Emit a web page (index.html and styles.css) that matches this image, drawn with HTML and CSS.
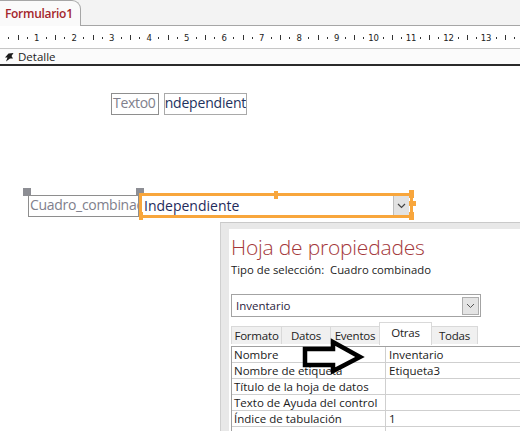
FILE: index.html
```html
<!DOCTYPE html>
<html lang="es">
<head>
    <meta charset="UTF-8">
    <title>Formulario1</title>
    <link rel="stylesheet" href="styles.css">
</head>
<body>
    <div class="doc-tabs">
        <div class="doc-tab">Formulario1</div>
    </div>

    <div class="ruler">
        <div class="ru-unit"><span class="dot"></span><span class="bar"></span><span class="dot"></span><span class="num">1</span></div>
        <div class="ru-unit"><span class="dot"></span><span class="bar"></span><span class="dot"></span><span class="num">2</span></div>
        <div class="ru-unit"><span class="dot"></span><span class="bar"></span><span class="dot"></span><span class="num">3</span></div>
        <div class="ru-unit"><span class="dot"></span><span class="bar"></span><span class="dot"></span><span class="num">4</span></div>
        <div class="ru-unit"><span class="dot"></span><span class="bar"></span><span class="dot"></span><span class="num">5</span></div>
        <div class="ru-unit"><span class="dot"></span><span class="bar"></span><span class="dot"></span><span class="num">6</span></div>
        <div class="ru-unit"><span class="dot"></span><span class="bar"></span><span class="dot"></span><span class="num">7</span></div>
        <div class="ru-unit"><span class="dot"></span><span class="bar"></span><span class="dot"></span><span class="num">8</span></div>
        <div class="ru-unit"><span class="dot"></span><span class="bar"></span><span class="dot"></span><span class="num">9</span></div>
        <div class="ru-unit"><span class="dot"></span><span class="bar"></span><span class="dot"></span><span class="num">10</span></div>
        <div class="ru-unit"><span class="dot"></span><span class="bar"></span><span class="dot"></span><span class="num">11</span></div>
        <div class="ru-unit"><span class="dot"></span><span class="bar"></span><span class="dot"></span><span class="num">12</span></div>
        <div class="ru-unit"><span class="dot"></span><span class="bar"></span><span class="dot"></span><span class="num">13</span></div>
        <div class="ru-unit"><span class="dot"></span><span class="bar"></span><span class="dot"></span><span class="num"></span></div>
    </div>

    <div class="section-bar">
        <svg class="section-icon" width="10" height="10" viewBox="0 0 10 10">
            <path d="M9.5 1 L4.5 1.5 L1 5.5 L3.5 5.5 L2 9.5 L6 6.5 L9 6.5 L7.5 4 Z" fill="#1a1a1a"/>
        </svg>
        <span>Detalle</span>
    </div>

    <!-- superficie de diseño -->
    <div class="canvas">
        <div class="ctl label-ctl texto0">Texto0</div>
        <div class="ctl text-ctl textbox0"><span class="cut">Independiente</span></div>

        <span class="handle gray h-l1"></span>
        <span class="handle gray h-l2"></span>
        <div class="ctl label-ctl combo-label">Cuadro_combinado</div>

        <div class="combo">
            <span class="combo-text">Independiente</span>
            <span class="combo-btn">
                <svg width="9" height="6" viewBox="0 0 9 6"><path d="M1 1 L4.5 4.5 L8 1" fill="none" stroke="#444" stroke-width="1.2"/></svg>
            </span>
        </div>
        <span class="handle orange o-top"></span>
        <span class="handle orange o-bl"></span>
        <span class="handle orange o-tr"></span>
        <span class="handle orange o-mr"></span>
        <span class="handle orange o-br"></span>

        <!-- hoja de propiedades flotante -->
        <div class="prop-sheet">
            <div class="prop-inner">
                <h2 class="prop-title">Hoja de propiedades</h2>
                <div class="prop-sel">Tipo de selección:&nbsp; Cuadro combinado</div>

                <div class="prop-select">
                    <span>Inventario</span>
                    <span class="select-btn">
                        <svg width="9" height="6" viewBox="0 0 9 6"><path d="M1 1 L4.5 4.5 L8 1" fill="none" stroke="#555" stroke-width="1"/></svg>
                    </span>
                </div>

                <div class="prop-tabs">
                    <span class="ptab">Formato</span>
                    <span class="ptab">Datos</span>
                    <span class="ptab">Eventos</span>
                    <span class="ptab active">Otras</span>
                    <span class="ptab">Todas</span>
                </div>

                <div class="prop-grid">
                    <div class="prow"><span class="pname">Nombre</span><span class="pval">Inventario</span></div>
                    <div class="prow"><span class="pname">Nombre de etiqueta</span><span class="pval">Etiqueta3</span></div>
                    <div class="prow"><span class="pname">Título de la hoja de datos</span><span class="pval"></span></div>
                    <div class="prow"><span class="pname">Texto de Ayuda del control</span><span class="pval"></span></div>
                    <div class="prow"><span class="pname">Índice de tabulación</span><span class="pval">1</span></div>
                    <div class="prow"><span class="pname">Punto de tabulación</span><span class="pval">Sí</span></div>
                </div>
            </div>
        </div>

        <svg class="callout-arrow" width="70" height="42" viewBox="0 0 70 42">
            <path d="M5 12 L33 12 L33 5 L60 20 L33 34 L33 28 L5 28 Z" fill="#fff" stroke="#000" stroke-width="4.5" stroke-linejoin="miter"/>
        </svg>
    </div>
</body>
</html>
```

FILE: styles.css
```css
* {
    margin: 0;
    padding: 0;
    box-sizing: border-box;
}

body {
    width: 520px;
    height: 431px;
    overflow: hidden;
    background: #fff;
    font-family: "Open Sans", "Noto Sans", sans-serif;
    color: #222;
}

/* pestañas de documento */
.doc-tabs {
    height: 26px;
    background: #f3f3f3;
    border-bottom: 1px solid #a6a6a6;
    display: flex;
    align-items: flex-end;
}

.doc-tab {
    width: 81px;
    height: 26px;
    margin-bottom: -1px;
    background: #fafafa;
    border: 1px solid #a6a6a6;
    border-left: none;
    border-bottom: none;
    border-top-right-radius: 9px;
    padding: 4px 0 0 5px;
    font-size: 12px;
    font-weight: 600;
    color: #a4262c;
    letter-spacing: -0.3px;
}

/* regla */
.ruler {
    height: 22px;
    background: #fff;
    border-bottom: 1px solid #c6c6c6;
    display: flex;
    align-items: center;
    padding-left: 4px;
    margin-top: 1px;
}

.ru-unit {
    flex: 0 0 37.5px;
    display: flex;
    align-items: center;
}

.ru-unit span {
    flex: 1;
    display: flex;
    justify-content: center;
    align-items: center;
}

.ru-unit .dot::before {
    content: "";
    width: 1px;
    height: 2px;
    background: #333;
}

.ru-unit .bar::before {
    content: "";
    width: 1px;
    height: 5px;
    background: #333;
}

.ru-unit .num {
    font-family: "DejaVu Sans", sans-serif;
    font-size: 8.5px;
    color: #222;
    white-space: nowrap;
}

/* barra de sección */
.section-bar {
    height: 17px;
    background: #fbfbfb;
    border-bottom: 2px solid #2a2a2a;
    display: flex;
    align-items: center;
    gap: 4px;
    padding-left: 4px;
    font-size: 11.5px;
    color: #222;
}

/* superficie */
.canvas {
    position: relative;
    height: 366px;
    background: #fff;
}

.ctl {
    position: absolute;
    height: 22px;
    font-size: 14px;
    line-height: 18px;
    white-space: nowrap;
    overflow: hidden;
}

.label-ctl {
    border: 1px solid #8e8e8e;
    color: #80808c;
    padding-left: 1px;
}

.text-ctl {
    border: 1px solid #a9a9a9;
    color: #22325e;
}

.texto0 {
    left: 111px;
    top: 27px;
    width: 48px;
    letter-spacing: -0.3px;
}

.textbox0 {
    left: 164px;
    top: 27px;
    width: 83px;
    letter-spacing: -0.2px;
}

.textbox0 .cut {
    display: inline-block;
    margin-left: -4px;
}

.combo-label {
    left: 28px;
    top: 129px;
    width: 111px;
    letter-spacing: -0.3px;
}

.combo {
    position: absolute;
    left: 139px;
    top: 127px;
    width: 274px;
    height: 25px;
    border: 3px solid #f8a63c;
    display: flex;
    align-items: center;
    justify-content: space-between;
    padding-left: 2px;
}

.combo-text {
    font-size: 14px;
    color: #1f2b5c;
}

.combo-btn {
    width: 16px;
    height: 19px;
    margin-right: 1px;
    background: #e2e2e2;
    border-left: 1px solid #bdbdbd;
    display: flex;
    align-items: center;
    justify-content: center;
}

.handle {
    position: absolute;
}

.handle.gray {
    width: 8px;
    height: 8px;
    background: #8d8e94;
}

.h-l1 { left: 23px; top: 122px; }
.h-l2 { left: 136px; top: 122px; }

.handle.orange {
    background: #f8a63c;
}

.o-top { left: 274px; top: 125px; width: 4px; height: 8px; }
.o-bl { left: 139px; top: 146px; width: 4px; height: 8px; }
.o-tr { left: 409px; top: 124px; width: 5px; height: 8px; }
.o-mr { left: 409px; top: 135px; width: 7px; height: 5px; }
.o-br { left: 409px; top: 146px; width: 5px; height: 8px; }

/* hoja de propiedades */
.prop-sheet {
    position: absolute;
    left: 220px;
    top: 156px;
    width: 320px;
    height: 230px;
    background: #e8e8e8;
    border-top: 1px solid #c9c9c9;
    border-left: 1px solid #cfcfcf;
    padding: 6px 0 0 8px;
}

.prop-inner {
    background: #fff;
    height: 100%;
    padding: 4px 0 0 2px;
}

.prop-title {
    font-size: 21px;
    font-weight: 300;
    color: #a4373a;
    line-height: 28px;
    letter-spacing: -0.2px;
}

.prop-sel {
    font-size: 11.3px;
    color: #222;
    margin-top: 1px;
}

.prop-select {
    margin-top: 17px;
    width: 250px;
    height: 23px;
    border: 1px solid #a3a3a3;
    display: flex;
    align-items: center;
    justify-content: space-between;
    padding-left: 4px;
    font-size: 11.5px;
    color: #2a1d40;
}

.select-btn {
    width: 17px;
    height: 18px;
    margin-right: 1px;
    background: #e4e4e4;
    border: 1px solid #adadad;
    display: flex;
    align-items: center;
    justify-content: center;
}

.prop-tabs {
    margin-top: 5px;
    height: 22px;
    display: flex;
    align-items: flex-end;
}

.ptab {
    height: 18px;
    background: #f0f0f0;
    border: 1px solid #d9d9d9;
    border-bottom: none;
    margin-right: -1px;
    font-size: 11.5px;
    line-height: 17px;
    letter-spacing: -0.2px;
    color: #222;
    text-align: center;
    white-space: nowrap;
}

.ptab:nth-child(1) { width: 51px; }
.ptab:nth-child(2) { width: 50px; }
.ptab:nth-child(3) { width: 50px; }
.ptab:nth-child(5) { width: 47px; }

.ptab.active {
    width: 53px;
    height: 23px;
    margin-bottom: -1px;
    background: #fff;
    line-height: 19px;
    position: relative;
}

.prop-grid {
    margin-top: 2px;
    border-top: 1px solid #a0a0a0;
    border-left: 1px solid #a0a0a0;
}

.prow {
    display: flex;
    height: 16px;
    border-bottom: 1px solid #cfcfcf;
    font-size: 11.5px;
    line-height: 16px;
    color: #1a1a1a;
}

.pname {
    width: 154px;
    padding-left: 2px;
    border-right: 1px solid #cfcfcf;
    white-space: nowrap;
}

.pval {
    padding-left: 3px;
}

.callout-arrow {
    position: absolute;
    left: 300px;
    top: 271px;
}
```
